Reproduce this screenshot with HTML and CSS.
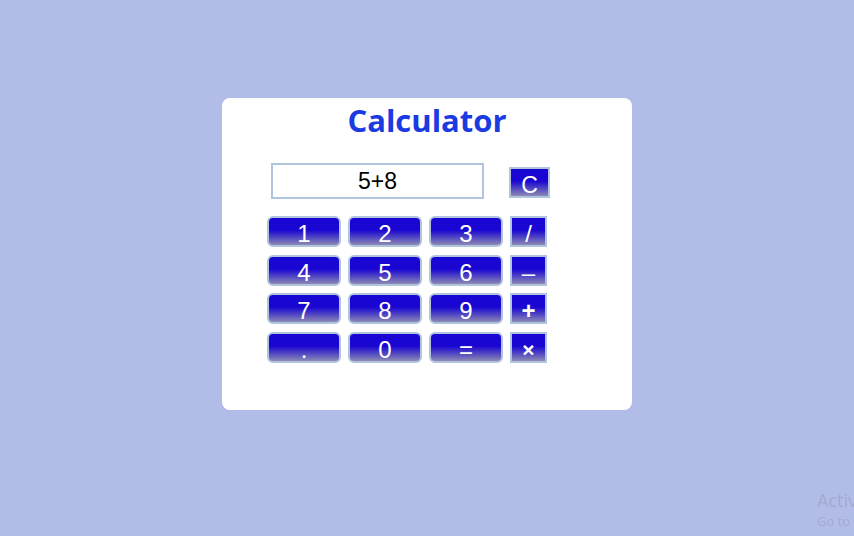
FILE: index.html
```html
<!DOCTYPE html>
<html>
<head>
<meta charset="utf-8">
<link rel="stylesheet" href="styles.css">
</head>
<body>
<div class="card">
  <h1 class="title">Calculator</h1>
  <div class="display-row">
    <div class="display">5+8</div>
    <button class="btn op clear">C</button>
  </div>
  <div class="keys">
    <button class="btn num">1</button>
    <button class="btn num">2</button>
    <button class="btn num">3</button>
    <button class="btn op">/</button>
    <button class="btn num">4</button>
    <button class="btn num">5</button>
    <button class="btn num">6</button>
    <button class="btn op">–</button>
    <button class="btn num">7</button>
    <button class="btn num">8</button>
    <button class="btn num">9</button>
    <button class="btn op plus">+</button>
    <button class="btn num dot">.</button>
    <button class="btn num">0</button>
    <button class="btn num">=</button>
    <button class="btn op mul">×</button>
  </div>
</div>
<div class="watermark">
  <div class="wm1">Activate Windows</div>
  <div class="wm2">Go to Settings to activate Windows.</div>
</div>
</body>
</html>
```
FILE: styles.css
```css
html, body {
  margin: 0;
  padding: 0;
  width: 854px;
  height: 536px;
  overflow: hidden;
  background: #b1bce8;
  font-family: "Liberation Sans", Arial, sans-serif;
}
body {
  padding-top: 98px;
  box-sizing: border-box;
}
.card {
  margin-left: 222px;
  width: 410px;
  height: 312px;
  background: #ffffff;
  border-radius: 8px;
  box-sizing: border-box;
  padding-left: 45px;
}
.title {
  margin: 0 0 0 -45px;
  padding-top: 1px;
  height: 65px;
  box-sizing: border-box;
  text-align: center;
  font-family: "Open Sans", sans-serif;
  font-weight: 700;
  font-size: 31px;
  line-height: 42px;
  color: #1a3be2;
}
.display-row {
  display: flex;
  align-items: flex-start;
  padding-left: 4px;
  height: 53px;
}
.display {
  width: 213px;
  height: 36px;
  box-sizing: border-box;
  border: 2px solid #b0c4de;
  text-align: center;
  font-size: 23px;
  line-height: 32px;
  color: #000;
}
.btn {
  display: block;
  margin: 0;
  padding: 5px 0 0 0;
  border: 2px solid #b0c4de;
  background: linear-gradient(to bottom, #1a06d2 0%, #1a06d2 45%, #8c8ab4 100%);
  color: #fff;
  font-family: "Liberation Sans", Arial, sans-serif;
  font-size: 24px;
  line-height: 22px;
  height: 31px;
  box-sizing: border-box;
  text-align: center;
  overflow: visible;
}
.clear {
  width: 41px;
  margin-left: 25px;
  margin-top: 4px;
  font-size: 23px;
}
.keys {
  display: grid;
  grid-template-columns: 74px 74px 74px 37px;
  grid-auto-rows: 31px;
  column-gap: 7px;
  row-gap: 7.67px;
}
.num {
  border-radius: 6px;
}
.plus {
  font-weight: 700;
}
.mul {
  font-weight: 700;
  font-size: 21px;
}
.watermark {
  position: fixed;
  left: 817px;
  top: 488px;
  white-space: nowrap;
  color: #a2aacf;
  font-family: "Open Sans", sans-serif;
}
.wm1 {
  font-size: 18px;
  line-height: 24px;
}
.wm2 {
  font-size: 13px;
  line-height: 18px;
}
```
